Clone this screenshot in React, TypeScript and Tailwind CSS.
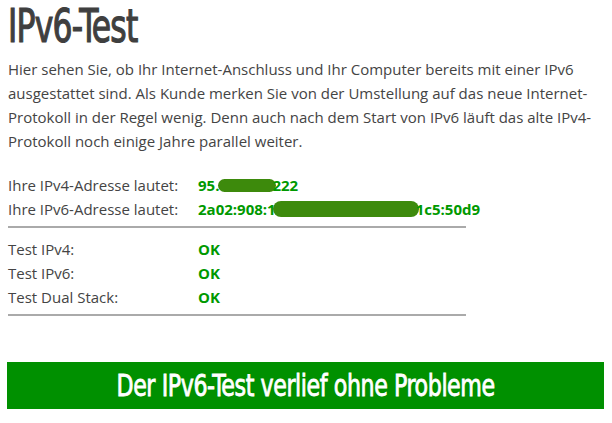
export default function App() {
  return (
    <div className="w-[612px] h-[423px] bg-white overflow-hidden text-[#444] font-['Open_Sans',sans-serif]">
      <div className="pl-2 pr-2">
        <h1 className="font-['DejaVu_Sans_Condensed','DejaVu_Sans',sans-serif] text-[46px] leading-[52px] text-[#3f3f3f] tracking-[-1px]">
          <span className="inline-block origin-left scale-x-[0.76] [-webkit-text-stroke:1.2px_#3f3f3f]">IPv6-Test</span>
        </h1>
        <p className="text-[15px] leading-[24px] mt-[5px] w-[600px]">
          Hier sehen Sie, ob Ihr Internet-Anschluss und Ihr Computer bereits mit einer IPv6 ausgestattet sind. Als Kunde merken Sie von der Umstellung auf das neue Internet-Protokoll in der Regel wenig. Denn auch nach dem Start von IPv6 läuft das alte IPv4-Protokoll noch einige Jahre parallel weiter.
        </p>

        <div className="w-[458px] mt-[20px] text-[15px] leading-[24px]">
          <div className="flex">
            <div className="w-[190px] shrink-0">Ihre IPv4-Adresse lautet:</div>
            <div className="font-bold text-[#009900] flex items-center whitespace-nowrap">
              95.
              <span className="inline-block w-[58px] h-[13px] bg-[#3d8a0c] rounded-full -ml-[1px] -mr-[4px]" />
              222
            </div>
          </div>
          <div className="flex">
            <div className="w-[190px] shrink-0">Ihre IPv6-Adresse lautet:</div>
            <div className="font-bold text-[#009900] flex items-center whitespace-nowrap">
              2a02:908:1
              <span className="inline-block w-[146px] h-[16px] bg-[#3d8a0c] rounded-full -ml-[3px] -mr-[3px]" />
              1c5:50d9
            </div>
          </div>
          <div className="border-t-2 border-[#aaa] mt-[5px] pt-[9px]">
            <div className="flex">
              <div className="w-[190px] shrink-0">Test IPv4:</div>
              <div className="font-bold text-[#009900]">OK</div>
            </div>
            <div className="flex">
              <div className="w-[190px] shrink-0">Test IPv6:</div>
              <div className="font-bold text-[#009900]">OK</div>
            </div>
            <div className="flex">
              <div className="w-[190px] shrink-0">Test Dual Stack:</div>
              <div className="font-bold text-[#009900]">OK</div>
            </div>
          </div>
          <div className="border-t-2 border-[#aaa] mt-[5px]" />
        </div>
      </div>

      <div className="ml-[7px] w-[597px] mt-[46px] h-[47px] bg-[#009000] flex items-center justify-center">
        <span className="inline-block scale-x-[0.82] font-['DejaVu_Sans_Condensed','DejaVu_Sans',sans-serif] text-white text-[30px] tracking-[-0.5px] whitespace-nowrap [-webkit-text-stroke:0.8px_#ffffff]">
          Der IPv6-Test verlief ohne Probleme
        </span>
      </div>
    </div>
  );
}
